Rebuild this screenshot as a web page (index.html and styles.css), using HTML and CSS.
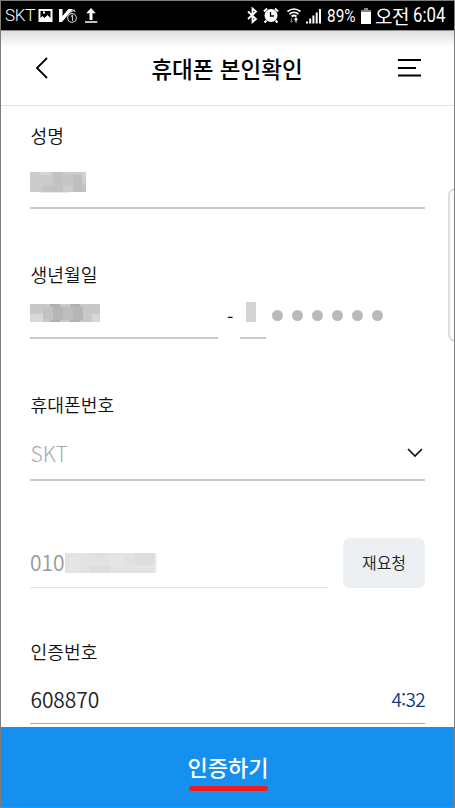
FILE: index.html
```html
<!DOCTYPE html>
<html lang="ko">
<head>
<meta charset="utf-8">
<title>휴대폰 본인확인</title>
<link rel="stylesheet" href="styles.css">
</head>
<body>
<div class="phone">
  <div class="status">
    <span class="carrier">SKT</span>
    <svg class="notices" width="64" height="29" viewBox="38 1 64 29">
      <path d="M39.500 9h14v13h-14z" fill="#fff"/>
      <path d="M41.500 11h10v7l-3-3-3 3-2-2-2 2z" fill="#000"/><path d="M44 11.500h2v2h-2z" fill="#fff"/>
      <path d="M60 9h3.500v7l6-7H74L63 22h-3z" fill="#fff"/>
      <circle cx="73" cy="18" r="4.300" fill="#000" stroke="#bbb" stroke-width="1.200"/>
      <path d="M72 16.500l1.500-1v5.500M71 12.500l4-2.500 1 2" fill="none" stroke="#ccc" stroke-width="1.200"/>
      <path d="M92 8l4.800 5.300h-3.300V20h-3v-6.700h-3.300zM86 21.200h12.300v1.500H86z" fill="#fff"/>
    </svg>
    <svg class="signals" width="81" height="29" viewBox="241 1 81 29" fill="none" stroke="#fff">
      <path d="M245 11.500l8 7.500-3.500 3v-13.500l3.500 3-8 7.500" stroke-width="1.800"/>
      <circle cx="268" cy="15.500" r="6.500" fill="#fff" stroke="none"/>
      <path d="M261 11.500l3-3M275 11.500l-3-3M263.500 20.500l-2 2M272.500 20.500l2 2" stroke-width="2"/>
      <path d="M267.500 12v4h3.500" stroke="#000" stroke-width="1.300"/>
      <path d="M284.500 11.500q6.500-5 13 0M286.500 14q4.500-3.500 9 0M288.500 16.500q2.500-2 5 0" stroke-width="1.700"/>
      <path d="M288.500 18v4M287 20.500l1.500 2 1.500-2" stroke="#777"/><path d="M293 22.500v-4M291.500 20l1.500-2 1.500 2" stroke-width="1.200"/>
      <path d="M303 23.500h2v-2h-2zM306.200 23.500h2v-5h-2zM309.400 23.500h2v-8h-2zM312.700 23.500h2v-11h-2zM316 23.500h2V9h-2z" fill="#fff" stroke="none"/>
    </svg>
    <span class="percent">89%</span>
    <svg class="battery" width="12" height="16" viewBox="0 0 12 16"><path d="M4 0h4v2H4zM1 2h10v2H1z" fill="#888"/><path d="M1 4h10v12H1z" fill="#fff"/></svg>
    <span class="ampm">오전</span>
    <span class="clock">6:04</span>
  </div>

  <header class="header">
    <svg class="back" width="14" height="22" viewBox="0 0 14 22"><path d="M12 1L2 11l10 10" fill="none" stroke="#000" stroke-width="1.800"/></svg>
    <h1 class="title">휴대폰 본인확인</h1>
    <svg class="menu" width="23" height="18" viewBox="0 0 23 18"><path d="M0 0h23v2H0zM0 8h18v2H0zM0 15.500h23v2H0z" fill="#000"/></svg>
  </header>

  <main class="form">
    <section class="group name">
      <h2 class="label">성명</h2>
      <div class="field">
        <svg width="57" height="21" viewBox="0 0 57 21" shape-rendering="crispEdges">
          <path d="M0 0h56v20H0z" fill="#cbcbcb"/><path d="M10 0h10v3H10z" fill="#d6d6d6"/><path d="M23 0h10v20H23z" fill="#c2c2c2"/><path d="M13 13h10v7H13z" fill="#c3c3c3"/><path d="M33 3h10v10H33z" fill="#c6c6c6"/><path d="M43 3h9v17h-9z" fill="#bfbfbf"/><path d="M52 0h4v10h-4z" fill="#d0d0d0"/><path d="M52 13h4v7h-4z" fill="#c2c2c2"/><path d="M10 20h30v1H10z" fill="#ececec"/>
        </svg>
      </div>
    </section>

    <section class="group birth">
      <h2 class="label">생년월일</h2>
      <div class="split">
        <div class="field front">
          <svg width="70" height="18" viewBox="0 0 70 18" shape-rendering="crispEdges">
            <path d="M0 0h70v18H0z" fill="#c8c8c8"/><path d="M0 10h13v8H0zM62 10h8v8h-8z" fill="#d8d8d8"/><path d="M20 0h10v3H20zM40 0h10v3H40zM20 16h10v2H20zM40 16h10v2H40z" fill="#b0b0b0"/><path d="M23 3h10v13H23zM43 3h10v13H43z" fill="#b6b6b6"/><path d="M33 3h10v13H33z" fill="#bdbdbd"/><path d="M13 3h10v12H13z" fill="#c2c2c2"/>
          </svg>
        </div>
        <span class="dash">-</span>
        <div class="field back-digit"><span class="digit-mask"></span></div>
        <div class="dots"><i></i><i></i><i></i><i></i><i></i><i></i></div>
      </div>
    </section>

    <section class="group carrier-group">
      <h2 class="label">휴대폰번호</h2>
      <div class="field select">
        <span class="placeholder">SKT</span>
        <svg width="16" height="10" viewBox="0 0 16 10"><path d="M1 1l7 7 7-7" fill="none" stroke="#111" stroke-width="1.700"/></svg>
      </div>
    </section>

    <div class="phone-row">
      <div class="field number">
        <span class="prefix">010</span>
        <svg width="92" height="20" viewBox="0 0 92 20" shape-rendering="crispEdges">
          <path d="M0 0h90v20H0z" fill="#e3e3e3"/><path d="M5 4h10v14H5z" fill="#e6e6e6"/><path d="M30 0h10v4H30zM25 13h20v7H25zM70 0h20v12H70z" fill="#dedede"/><path d="M45 4h13v9H45z" fill="#e5e5e5"/><path d="M58 4h12v9H58z" fill="#e1e1e1"/><path d="M90 0h2v20h-2z" fill="#f1f1f1"/>
        </svg>
      </div>
      <button class="resend">재요청</button>
    </div>

    <section class="group code">
      <h2 class="label">인증번호</h2>
      <div class="field select">
        <span class="value">608870</span>
        <span class="timer">4:32</span>
      </div>
    </section>
  </main>

  <button class="submit"><span class="submit-text">인증하기</span></button>
  <div class="edge-panel"></div>
</div>
</body>
</html>
```
FILE: styles.css
```css
* { box-sizing: border-box; }
body {
  margin: 0;
  font-family: "Noto Sans CJK KR", sans-serif;
  color: #111;
  background: #fff;
}
h1, h2 { margin: 0; }
svg { display: block; flex: none; }
button { border: 0; padding: 0; font-family: inherit; }
.phone {
  position: relative;
  width: 455px;
  height: 808px;
  border: 1px solid #7d7d7d;
  display: flex;
  flex-direction: column;
  overflow: hidden;
}
.status {
  flex: none;
  height: 29px;
  background: #000;
  color: #fff;
  display: flex;
  align-items: center;
  font-family: Roboto, sans-serif;
  font-size: 17px;
  line-height: 29px;
  white-space: nowrap;
}
.carrier { width: 33px; margin-left: 4px; font-weight: 300; letter-spacing: -0.3px; }
.notices { margin-left: -1px; }
.signals { margin-left: auto; }
.percent { width: 35px; margin-left: 2px; font-size: 19px; transform: scaleX(.81); transform-origin: left; }
.battery { margin-left: -2px; }
.ampm { width: 36px; margin-left: 3px; font-family: "Noto Sans CJK KR", sans-serif; font-size: 19px; letter-spacing: -0.5px; }
.clock { width: 41px; margin-left: 2px; font-size: 20px; transform: scaleX(.84); transform-origin: left; }

.header {
  flex: none;
  height: 76px;
  padding: 0 33px 1px 34px;
  display: flex;
  align-items: center;
  justify-content: space-between;
  background: linear-gradient(#dedede, #fff 16px);
  border-top: 1px solid #909090;
  border-bottom: 1px solid #e2e2e2;
}
.title {
  margin-left: 7px;
  font-size: 22.5px;
  font-weight: 500;
  line-height: 32px;
  color: #000;
}
.form { flex: 1; padding: 16px 29px 0; min-height: 0; }
.group { display: flex; flex-direction: column; }
.label {
  padding-left: 0.5px;
  font-size: 18.2px;
  font-weight: 350;
  line-height: 26px;
  height: 28px;
}
.field {
  border-bottom: 2px solid #cacaca;
  display: flex;
  align-items: flex-start;
}
.name { height: 139px; }
.name .field { height: 59px; padding-top: 22px; }
.birth { height: 130px; }
.split { display: flex; height: 50px; }
.front { width: 188px; padding-top: 15px; }
.dash { width: 22px; padding: 15px 0 0 9px; font-size: 18px; line-height: 24px; }
.back-digit { width: 26px; padding: 13px 0 0 6px; }
.digit-mask { width: 10px; height: 20px; background: #d4d4d4; }
.dots { display: flex; gap: 9px; padding: 21px 0 0 6px; }
.dots i { width: 11px; height: 11px; border-radius: 50%; background: #bababa; }
.carrier-group { height: 147px; }
.carrier-group .field { height: 62px; }
.select { align-items: center; justify-content: space-between; }
.placeholder { padding-left: 0.5px; font-size: 21px; font-weight: 300; color: #aaa; line-height: 30px; margin-top: 8px; }
.carrier-group svg { margin: 8px 2px 0 0; }
.phone-row { display: flex; justify-content: space-between; height: 100px; }
.number { width: 298px; height: 50px; border-bottom: 1px solid #e5e5e5; padding-top: 15px; }
.prefix { width: 35px; font-size: 21px; font-weight: 350; line-height: 18px; color: #999; }
.resend {
  width: 82px;
  height: 50px;
  padding-bottom: 2px;
  border-radius: 7px;
  background: #ecf0f3;
  color: #222;
  font-size: 16px;
  font-weight: 350;
}
.code .field { height: 58px; border-bottom: 1px solid #aaa; }
.value { padding-left: 0.5px; font-size: 21px; font-weight: 350; line-height: 30px; margin-top: 8px; letter-spacing: -0.1px; color: #222; }
.timer { font-size: 19px; font-weight: 350; line-height: 30px; margin-top: 8px; letter-spacing: -0.7px; color: #123d80; }
.submit {
  flex: none;
  height: 80px;
  background: #1590ee;
  color: #fff;
  display: flex;
  justify-content: center;
  align-items: flex-start;
}
.submit-text {
  margin: 23px 0 0 1px;
  height: 41px;
  font-size: 22px;
  font-weight: 500;
  line-height: 32px;
  position: relative;
}
.submit-text::after {
  content: "";
  position: absolute;
  left: 1px;
  right: 0;
  bottom: 0;
  height: 5px;
  border-radius: 3px;
  background: #ed1c24;
}
.edge-panel {
  position: absolute;
  top: 188px;
  right: -8px;
  width: 14px;
  height: 152px;
  border: 1px solid #bbb;
  border-left: 2px solid #ddd;
  border-radius: 6px;
  background: #fafafa;
}
```
